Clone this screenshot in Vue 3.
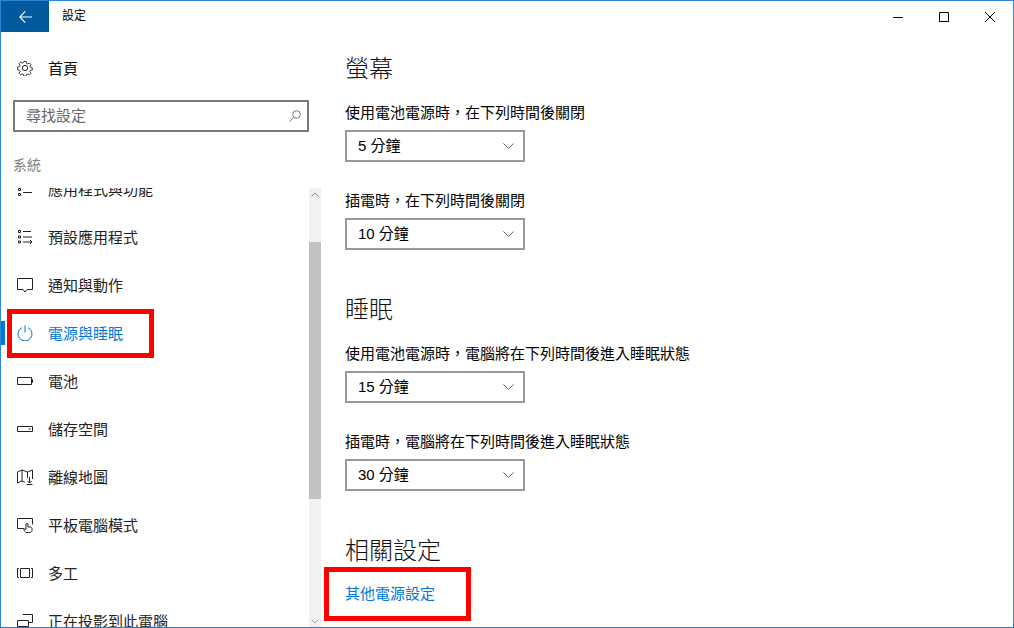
<template>
  <div class="window">
    <div class="titlebar">
      <button class="back">
        <svg width="13" height="12" viewBox="0 0 13 12" fill="none" stroke="#fff" stroke-width="1.1">
          <path d="M.8 6H13M6.300.4.800 6l5.500 5.600" />
        </svg>
      </button>
      <span class="app-title">設定</span>
      <div class="controls">
        <span class="ctl">
          <svg width="12" height="12" viewBox="0 0 12 12" fill="none" stroke="#000"><path d="M1 6.500h10" /></svg>
        </span>
        <span class="ctl">
          <svg width="12" height="12" viewBox="0 0 12 12" fill="none" stroke="#000"><path d="M1.500 1.500h9v9h-9z" /></svg>
        </span>
        <span class="ctl">
          <svg width="12" height="12" viewBox="0 0 12 12" fill="none" stroke="#000"><path d="M1 1l10 10M11 1 1 11" /></svg>
        </span>
      </div>
    </div>

    <div class="body">
      <aside class="sidebar">
        <div class="home">
          <svg class="icon" width="16" height="16" viewBox="0 0 16 16" fill="none" stroke="#222" stroke-width="1">
            <circle cx="8" cy="8" r="2.600" />
            <path d="M6.800.8h2.400l.4 2 1.500.7 1.800-1.100 1.700 1.700-1.100 1.800.6 1.400 2 .5v2.400l-2 .4-.6 1.500 1.100 1.800-1.700 1.700-1.800-1.100-1.500.6-.4 2H6.800l-.4-2-1.500-.6-1.800 1.100-1.700-1.700 1.100-1.800-.6-1.500-2-.4V6.800l2-.5.6-1.400-1.100-1.800 1.700-1.700 1.800 1.100 1.500-.7z" transform="translate(.8 .8) scale(.9)" />
          </svg>
          <span class="text">首頁</span>
        </div>
        <div class="search">
          <span class="text-2">尋找設定</span>
          <svg width="12" height="12" viewBox="0 0 12 12" fill="none" stroke="#777" stroke-width="1">
            <circle cx="7.500" cy="4.500" r="3.800" />
            <path d="M4.800 7.200 .5 11.500" />
          </svg>
        </div>
        <div class="group">系統</div>

        <div class="list-row">
          <div class="list">
            <div
              v-for="item in items"
              :key="item.label"
              class="item"
              :class="{ active: item.active }"
            >
              <svg class="icon" width="16" height="16" viewBox="0 0 16 16" fill="none" stroke="currentColor" stroke-width="1">
                <path :d="item.icon" />
              </svg>
              <span class="text">{{ item.label }}</span>
            </div>
          </div>
          <div class="scrollbar">
            <svg class="arrow" width="8" height="5" viewBox="0 0 8 5" fill="none" stroke="#888"><path d="M.5 4.500 4 1l3.500 3.500" /></svg>
            <div class="thumb"></div>
            <svg class="arrow bottom" width="8" height="5" viewBox="0 0 8 5" fill="none" stroke="#aaa"><path d="M.5.500 4 4 7.500.500" /></svg>
          </div>
        </div>
      </aside>

      <main class="content">
        <template v-for="sec in sections" :key="sec.title">
          <h2>{{ sec.title }}</h2>
          <div v-for="f in sec.fields" :key="f.label" class="field">
            <div class="label">{{ f.label }}</div>
            <div class="select">
              <span class="text-2">{{ f.value }}</span>
              <svg width="11" height="6" viewBox="0 0 11 6" fill="none" stroke="#666"><path d="M.4.400 5.500 5.500 10.600.400" /></svg>
            </div>
          </div>
        </template>
        <h2 class="related">相關設定</h2>
        <a class="link">其他電源設定</a>
      </main>
    </div>

    <div class="mark mark-nav"></div>
    <div class="mark mark-link"></div>
  </div>
</template>

<script setup>
const items = [
  { label: '應用程式與功能', icon: 'M1.500 7.500h2v2h-2zM1.500 12.500h2v2h-2zM6 11.500h9' },
  { label: '預設應用程式', icon: 'M1.500 1.500h2v2h-2zM1.500 7h2v2h-2zM1.500 12h2v2h-2zM6 2.500h8M6 8h9M6 13h8M13 11l2 2-2 2' },
  { label: '通知與動作', icon: 'M.5 1.500h15v11h-5.500L8 15l-2-2.500H.5z' },
  { label: '電源與睡眠', icon: 'M8 .5v7M5 2.600a7 7 0 1 0 6 0', active: true },
  { label: '電池', icon: 'M.5 4.500h14v7H.5zM14.500 6.500h1v3h-1z' },
  { label: '儲存空間', icon: 'M.5 5.500h15v5H.5zM11.500 8h2' },
  { label: '離線地圖', icon: 'M.5 3 5 1l5.500 2L15.500 1v9M.5 3v11L5 12l3 1.200M5 1v11M10.500 3v6M12.500 8v6M10.500 12l2 2 2-2M9.500 15.500h6' },
  { label: '平板電腦模式', icon: 'M7 11.500H.5v-10h15v6M9 15.500c-1-1-2-2-2-3s1-1 2 0V7c0-1 2-1 2 0v3h2.500c1 0 1.500 1 1.500 2v1.500c0 1-1 2-2 2z' },
  { label: '多工', icon: 'M2 3.500H.5v9H2M14 3.500h1.500v9H14M3.500 3.500h9v9h-9z' },
  { label: '正在投影到此電腦', icon: 'M5.500 1.500h10v8h-4M.5 7.500h11v6H.5zM3 15.500h6' }
]

const sections = [
  {
    title: '螢幕',
    fields: [
      { label: '使用電池電源時，在下列時間後關閉', value: '5 分鐘' },
      { label: '插電時，在下列時間後關閉', value: '10 分鐘' }
    ]
  },
  {
    title: '睡眠',
    fields: [
      { label: '使用電池電源時，電腦將在下列時間後進入睡眠狀態', value: '15 分鐘' },
      { label: '插電時，電腦將在下列時間後進入睡眠狀態', value: '30 分鐘' }
    ]
  }
]
</script>

<style>
html,
body {
  margin: 0;
  background: #fff;
}
</style>

<style scoped>
.window {
  position: relative;
  box-sizing: border-box;
  width: 1014px;
  height: 628px;
  border: 1px solid #2b88d8;
  border-bottom-color: #2b7cc4;
  background: #fff;
  overflow: hidden;
  display: flex;
  flex-direction: column;
  font-family: "Liberation Sans", "Noto Sans CJK TC", sans-serif;
  font-size: 15px;
  color: #000;
}

.titlebar {
  height: 31px;
  display: flex;
  align-items: center;
  flex: none;
}

.back {
  width: 48px;
  height: 31px;
  background: #005a9e;
  border: none;
  padding: 0;
  display: flex;
  align-items: center;
  justify-content: center;
}

.app-title {
  margin-left: 13px;
  padding-bottom: 4px;
  font-size: 12px;
}

.controls {
  margin-left: auto;
  display: flex;
}

.ctl {
  width: 46px;
  height: 31px;
  display: flex;
  align-items: center;
  justify-content: center;
}

.body {
  flex: 1;
  display: flex;
  min-height: 0;
}

.sidebar {
  width: 320px;
  flex: none;
  display: flex;
  flex-direction: column;
}

.icon {
  flex: none;
  margin-left: 16px;
  margin-right: 15px;
}

.text {
  padding-bottom: 2px;
}

.text-2 {
  padding-bottom: 4px;
}

.home {
  height: 48px;
  margin-top: 12px;
  display: flex;
  align-items: center;
  color: #111;
}

.search {
  box-sizing: border-box;
  width: 296px;
  height: 32px;
  margin: 8px 0 0 12px;
  padding: 0 6px 0 11px;
  border: 2px solid #7a7a7a;
  display: flex;
  align-items: center;
  justify-content: space-between;
  color: #666;
}

.group {
  height: 20px;
  line-height: 20px;
  margin: 23px 0 0 12px;
  font-size: 14px;
  color: #808080;
}

.list-row {
  flex: 1;
  min-height: 0;
  margin-top: 13px;
  display: flex;
}

.list {
  width: 308px;
  flex: none;
  overflow: hidden;
}

.item {
  position: relative;
  height: 48px;
  display: flex;
  align-items: center;
  color: #222;
}

.item:first-child {
  margin-top: -23px;
}

.item.active {
  color: #0078d7;
}

.item.active::before {
  content: "";
  position: absolute;
  left: 0;
  top: 12px;
  width: 4px;
  height: 24px;
  background: #0078d7;
}

.scrollbar {
  width: 12px;
  flex: none;
  background: #f1f1f1;
  display: flex;
  flex-direction: column;
  align-items: center;
}

.arrow {
  flex: none;
  margin-top: 4px;
}

.thumb {
  width: 12px;
  height: 257px;
  margin-top: 45px;
  background: #c2c2c2;
  flex: none;
}

.arrow.bottom {
  margin-top: auto;
  margin-bottom: 3px;
}

.content {
  flex: 1;
  padding: 21px 0 0 24px;
}

h2 {
  margin: 0;
  font-size: 24px;
  line-height: 32px;
  font-weight: 300;
  color: #111;
}

.label {
  line-height: 20px;
  margin-top: 18px;
}

.field + .field .label {
  margin-top: 29px;
}

.select {
  box-sizing: border-box;
  width: 180px;
  height: 32px;
  margin-top: 7px;
  padding: 0 9px 0 11px;
  border: 2px solid #999;
  display: flex;
  align-items: center;
  justify-content: space-between;
}

.field + h2 {
  margin-top: 44px;
}

.related {
  margin-top: 46px;
}

.link {
  display: block;
  margin-top: 17px;
  line-height: 20px;
  color: #0078d7;
}

.mark {
  position: absolute;
  box-sizing: border-box;
  border: 5px solid #f00;
  pointer-events: none;
}

.mark-nav {
  left: 6px;
  top: 308px;
  width: 147px;
  height: 49px;
}

.mark-link {
  left: 323px;
  top: 566px;
  width: 147px;
  height: 54px;
}
</style>
